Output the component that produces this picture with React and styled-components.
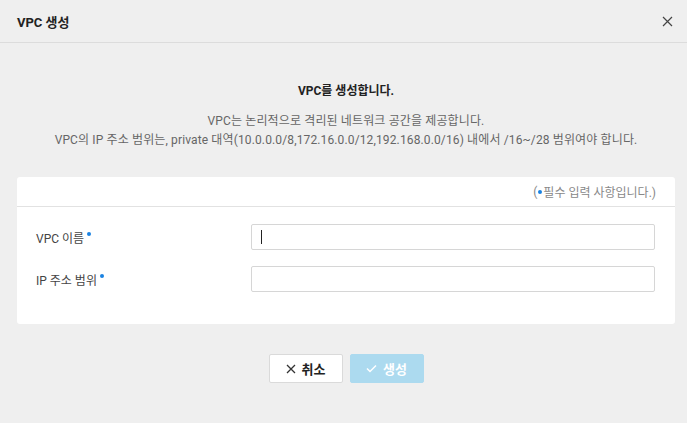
import styled, { createGlobalStyle } from "styled-components";

const Global = createGlobalStyle`
    html, body {
        margin: 0;
        padding: 0;
        background: #efefef;
        font-family: Roboto, "Noto Sans CJK KR", sans-serif;
    }
`;

const Dialog = styled.div`
    width: 687px;
    height: 423px;
    background: #efefef;
    display: flex;
    flex-direction: column;
`;

const Header = styled.div`
    height: 43px;
    box-sizing: border-box;
    border-bottom: 1px solid #dcdcdc;
    display: flex;
    align-items: center;
    justify-content: space-between;
    padding: 0 12px 0 17px;
`;

const Title = styled.h2`
    margin: 0;
    font-size: 13px;
    font-weight: bold;
    color: #222;
`;

const Close = styled.button`
    border: 0;
    background: none;
    padding: 0;
    width: 16px;
    height: 16px;
    display: flex;
    align-items: center;
    justify-content: center;
    cursor: pointer;
`;

const Body = styled.div`
    padding: 38px 12px 0 17px;
    display: flex;
    flex-direction: column;
    align-items: center;
`;

const Lead = styled.p`
    margin: 0;
    font-size: 12px;
    font-weight: bold;
    color: #222;
`;

const Desc = styled.p`
    margin: 14px 0 0;
    font-size: 12px;
    line-height: 19px;
    letter-spacing: 0.13px;
    color: #666;
    text-align: center;
`;

const Card = styled.div`
    align-self: stretch;
    margin-top: 27px;
    background: #fff;
    border-radius: 3px;
    padding-bottom: 32px;
`;

const CardTop = styled.div`
    height: 30px;
    box-sizing: border-box;
    border-bottom: 1px solid #e2e2e2;
    display: flex;
    align-items: center;
    justify-content: flex-end;
    padding-right: 19px;
    font-size: 12px;
    color: #888;
`;

const Dot = styled.span`
    display: inline-block;
    width: 4px;
    height: 4px;
    border-radius: 50%;
    background: #1a82e2;
    vertical-align: ${(p) => (p.$raised ? "7px" : "3px")};
    margin: 0 1px 0 ${(p) => (p.$raised ? "3px" : "1px")};
`;

const Row = styled.div`
    display: grid;
    grid-template-columns: 234px 404px;
    align-items: center;
    margin-top: ${(p) => p.$gap}px;
`;

const Label = styled.label`
    padding-left: 19px;
    font-size: 12px;
    color: #444;
`;

const Input = styled.input`
    height: 26px;
    box-sizing: border-box;
    border: 1px solid #d6d6d6;
    border-radius: 2px;
    padding: 0 10px;
    font-size: 12px;
    outline: none;
    font-family: inherit;
`;

const Caret = styled.span`
    position: absolute;
    left: 10px;
    top: 6px;
    width: 1px;
    height: 14px;
    background: #222;
`;

const InputWrap = styled.div`
    position: relative;
    display: flex;
    flex-direction: column;
`;

const Actions = styled.div`
    display: flex;
    gap: 7px;
    justify-content: center;
    margin-top: 30px;
`;

const Button = styled.button`
    width: 74px;
    height: 29px;
    box-sizing: border-box;
    border-radius: 2px;
    display: flex;
    align-items: center;
    justify-content: center;
    gap: 6px;
    font-family: inherit;
    font-size: 13px;
    font-weight: bold;
    border: 1px solid ${(p) => (p.$primary ? "#acdaef" : "#dadada")};
    background: ${(p) => (p.$primary ? "#acdaef" : "#fff")};
    color: ${(p) => (p.$primary ? "#fff" : "#222")};
`;

export default function App() {
    return <>
        <Global />
        <Dialog>
            <Header>
                <Title>VPC 생성</Title>
                <Close aria-label="close">
                    <svg width="11" height="11" viewBox="0 0 11 11">
                        <path d="M1 1L10 10M10 1L1 10" stroke="#444" strokeWidth="1.2" />
                    </svg>
                </Close>
            </Header>
            <Body>
                <Lead>VPC를 생성합니다.</Lead>
                <Desc>
                    VPC는 논리적으로 격리된 네트워크 공간을 제공합니다.<br />
                    VPC의 IP 주소 범위는, private 대역(10.0.0.0/8,172.16.0.0/12,192.168.0.0/16) 내에서 /16~/28 범위여야 합니다.
                </Desc>
                <Card>
                    <CardTop>(<Dot />필수 입력 사항입니다.)</CardTop>
                    <Row $gap={17}>
                        <Label>VPC 이름<Dot $raised /></Label>
                        <InputWrap>
                            <Input />
                            <Caret />
                        </InputWrap>
                    </Row>
                    <Row $gap={16}>
                        <Label>IP 주소 범위<Dot $raised /></Label>
                        <InputWrap>
                            <Input />
                        </InputWrap>
                    </Row>
                </Card>
                <Actions>
                    <Button>
                        <svg width="10" height="10" viewBox="0 0 10 10">
                            <path d="M1 1L9 9M9 1L1 9" stroke="#333" strokeWidth="1.3" />
                        </svg>
                        취소
                    </Button>
                    <Button $primary>
                        <svg width="11" height="9" viewBox="0 0 11 9">
                            <path d="M1 4.5L4 7.5L10 1.5" stroke="#fff" strokeWidth="1.5" fill="none" />
                        </svg>
                        생성
                    </Button>
                </Actions>
            </Body>
        </Dialog>
    </>;
}
